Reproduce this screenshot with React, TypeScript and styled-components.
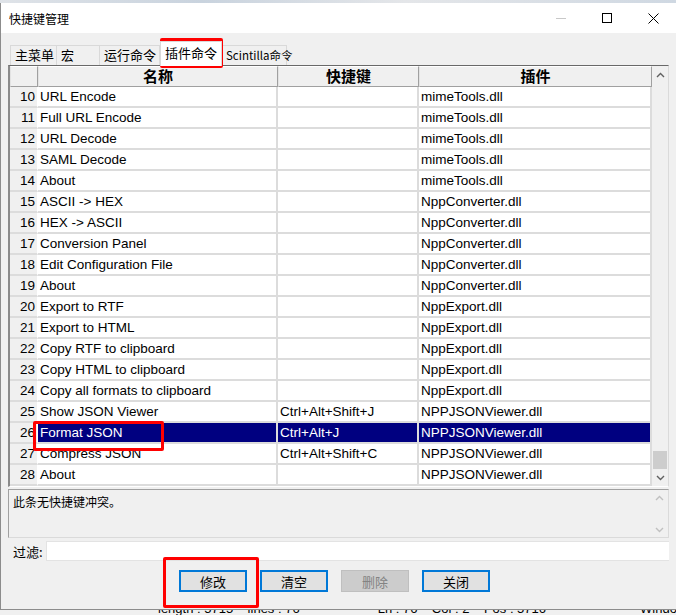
import styled, { createGlobalStyle } from 'styled-components';

const GlobalStyle = createGlobalStyle`
    body {
        margin: 0;
        background: #f0f0f0;
    }
    * { box-sizing: border-box; }
`;

const CJK = `"Noto Sans CJK SC", "Liberation Sans", sans-serif`;
const LATIN = `"Liberation Sans", Arial, "Noto Sans CJK SC", sans-serif`;

const Screen = styled.div`
    position: relative;
    width: 676px;
    height: 615px;
    overflow: hidden;
    background: #f0f0f0;
    display: flex;
    flex-direction: column;
`;

const TopStrip = styled.div`
    height: 3px;
    background: linear-gradient(90deg, #dfe3e8 0%, #c9d3de 30%, #e4e6e9 60%, #cfd8e2 100%);
`;

const Window = styled.div`
    height: 607px;
    display: flex;
    flex-direction: column;
    background: #f0f0f0;
    border-left: 1px solid #8c8c8c;
    border-bottom: 1px solid #8c8c8c;
`;

const TitleBar = styled.div`
    height: 30px;
    background: #ffffff;
    display: flex;
    align-items: center;
    padding-left: 8px;
`;

const TitleText = styled.div`
    flex: 1;
    font-family: ${CJK};
    font-size: 12px;
    color: #000;
`;

const WinButton = styled.div`
    width: 46px;
    height: 30px;
    display: flex;
    align-items: center;
    justify-content: center;
`;

const Content = styled.div`
    flex: 1;
    display: flex;
    flex-direction: column;
    padding: 0 7px 0 7px;
`;

const TabBar = styled.div`
    margin-top: 11px;
    height: 21px;
    display: flex;
    align-items: flex-end;
    padding-left: 2px;
`;

const Tab = styled.div<{ w: number; active?: boolean; small?: boolean }>`
    width: ${(p) => p.w}px;
    height: ${(p) => (p.active ? 25 : 20)}px;
    margin-bottom: ${(p) => (p.active ? -1 : 0)}px;
    padding: ${(p) => (p.active ? '2px 0 0 4px' : '0 0 0 4px')};
    background: ${(p) => (p.active ? '#ffffff' : '#f0f0f0')};
    border: 1px solid #d9d9d9;
    border-bottom: none;
    border-left: ${(p) => (p.active ? '1px solid #d9d9d9' : 'none')};
    font-family: ${CJK};
    font-size: ${(p) => (p.small ? '11.5px' : '13px')};
    line-height: 18px;
    color: #000;
    white-space: nowrap;
    position: relative;
    z-index: ${(p) => (p.active ? 1 : 0)};
    &:first-child { border-left: 1px solid #d9d9d9; }
`;

const Grid = styled.div`
    height: 422px;
    display: flex;
    border-top: 1px solid #696969;
    border-left: 2px solid #8a8a8a;
    border-bottom: 1px solid #ffffff;
    border-right: 1px solid #dadada;
    background: #ffffff;
`;

const Table = styled.div`
    width: 642px;
    display: flex;
    flex-direction: column;
`;

const Row = styled.div`
    display: grid;
    grid-template-columns: 28px 240px 141px 233px;
    height: 21px;
`;

const HeadCell = styled.div`
    background: #f0f0f0;
    border: 1px solid;
    border-color: #ffffff #a0a0a0 #a0a0a0 #e3e3e3;
    font-family: ${CJK};
    font-weight: bold;
    font-size: 15px;
    line-height: 18px;
    text-align: center;
    color: #000;
`;

const NumCell = styled.div`
    background: #f0f0f0;
    border-right: 1px solid #ffffff;
    border-bottom: 2px solid #dcdcdc;
    font-family: ${LATIN};
    font-size: 13.5px;
    line-height: 19px;
    text-align: right;
    padding-right: 2px;
    color: #000;
`;

const Cell = styled.div<{ selected?: boolean }>`
    background: ${(p) => (p.selected ? '#000080' : '#ffffff')};
    color: ${(p) => (p.selected ? '#ffffff' : '#000000')};
    border-right: 2px solid #dcdcdc;
    border-bottom: 2px solid #dcdcdc;
    font-family: ${LATIN};
    font-size: 13.5px;
    line-height: 19px;
    padding-left: 2px;
    white-space: nowrap;
    overflow: hidden;
`;

const ScrollBar = styled.div`
    width: 16px;
    display: flex;
    flex-direction: column;
    background: #f0f0f0;
`;

const ScrollArrow = styled.div`
    height: 17px;
    display: flex;
    align-items: center;
    justify-content: center;
`;

const ScrollTrack = styled.div`
    flex: 1;
    display: flex;
    flex-direction: column;
    justify-content: flex-end;
    align-items: center;
`;

const Thumb = styled.div`
    width: 14px;
    height: 18px;
    background: #cdcdcd;
`;

const MessageBox = styled.div`
    margin-top: 2px;
    height: 49px;
    display: flex;
    border: 1px solid #a0a0a0;
    border-right-color: #dadada;
    border-bottom-color: #dadada;
    background: #f0f0f0;
`;

const MessageText = styled.div`
    flex: 1;
    padding: 3px 0 0 4px;
    font-family: ${CJK};
    font-size: 12px;
    color: #000;
`;

const MiniScroll = styled.div`
    width: 17px;
    display: flex;
    flex-direction: column;
    justify-content: space-between;
    padding: 5px 0 4px;
    align-items: center;
`;

const FilterRow = styled.div`
    margin-top: 3px;
    height: 20px;
    display: flex;
    align-items: center;
`;

const FilterLabel = styled.div`
    width: 38px;
    padding-left: 5px;
    font-family: ${CJK};
    font-size: 13px;
    color: #000;
`;

const FilterInput = styled.div`
    flex: 1;
    height: 20px;
    background: #ffffff;
    border: 1px solid #e3e3e3;
    border-right: none;
`;

const ButtonRow = styled.div`
    margin-top: 9px;
    display: flex;
    gap: 13px;
    padding-left: 171px;
`;

const Button = styled.div<{ disabled?: boolean }>`
    width: 68px;
    height: 22px;
    display: flex;
    align-items: center;
    justify-content: center;
    background: ${(p) => (p.disabled ? '#cccccc' : '#e1e1e1')};
    border: ${(p) => (p.disabled ? '1px solid #bfbfbf' : '2px solid #0078d7')};
    font-family: ${CJK};
    font-size: 13px;
    color: ${(p) => (p.disabled ? '#838383' : '#000')};
`;

const StatusStrip = styled.div`
    height: 5px;
    overflow: hidden;
    background: #f0f0f0;
    display: flex;
    font-family: ${LATIN};
    font-size: 13px;
    line-height: 14px;
    color: #000;
`;

const StatusPart = styled.div<{ left: number }>`
    margin-left: ${(p) => p.left}px;
    margin-top: -8px;
    white-space: nowrap;
`;

const Mark = styled.div`
    position: absolute;
    border: 3px solid #ff0000;
    border-radius: 2px;
    pointer-events: none;
`;

const Chevron = ({ up, color = '#606060' }: { up?: boolean; color?: string }) => (
    <svg width="9" height="6" viewBox="0 0 9 6">
        <path
            d={up ? 'M1 5 L4.5 1.5 L8 5' : 'M1 1 L4.5 4.5 L8 1'}
            fill="none"
            stroke={color}
            strokeWidth="1.4"
        />
    </svg>
);

const rows: [number, string, string, string][] = [
    [10, 'URL Encode', '', 'mimeTools.dll'],
    [11, 'Full URL Encode', '', 'mimeTools.dll'],
    [12, 'URL Decode', '', 'mimeTools.dll'],
    [13, 'SAML Decode', '', 'mimeTools.dll'],
    [14, 'About', '', 'mimeTools.dll'],
    [15, 'ASCII -> HEX', '', 'NppConverter.dll'],
    [16, 'HEX -> ASCII', '', 'NppConverter.dll'],
    [17, 'Conversion Panel', '', 'NppConverter.dll'],
    [18, 'Edit Configuration File', '', 'NppConverter.dll'],
    [19, 'About', '', 'NppConverter.dll'],
    [20, 'Export to RTF', '', 'NppExport.dll'],
    [21, 'Export to HTML', '', 'NppExport.dll'],
    [22, 'Copy RTF to clipboard', '', 'NppExport.dll'],
    [23, 'Copy HTML to clipboard', '', 'NppExport.dll'],
    [24, 'Copy all formats to clipboard', '', 'NppExport.dll'],
    [25, 'Show JSON Viewer', 'Ctrl+Alt+Shift+J', 'NPPJSONViewer.dll'],
    [26, 'Format JSON', 'Ctrl+Alt+J', 'NPPJSONViewer.dll'],
    [27, 'Compress JSON', 'Ctrl+Alt+Shift+C', 'NPPJSONViewer.dll'],
    [28, 'About', '', 'NPPJSONViewer.dll'],
];

const selectedRow = 26;

export default function App() {
    return (
        <>
            <GlobalStyle />
            <Screen>
                <TopStrip />
                <Window>
                    <TitleBar>
                        <TitleText>快捷键管理</TitleText>
                        <WinButton>
                            <svg width="10" height="10" viewBox="0 0 10 10">
                                <path d="M0 5.5 H10" stroke="#c8c8c8" strokeWidth="1" />
                            </svg>
                        </WinButton>
                        <WinButton>
                            <svg width="10" height="10" viewBox="0 0 10 10">
                                <rect x="0.5" y="0.5" width="9" height="9" fill="none" stroke="#000" strokeWidth="1" />
                            </svg>
                        </WinButton>
                        <WinButton>
                            <svg width="11" height="11" viewBox="0 0 11 11">
                                <path d="M0.5 0.5 L10.5 10.5 M10.5 0.5 L0.5 10.5" stroke="#000" strokeWidth="1" />
                            </svg>
                        </WinButton>
                    </TitleBar>
                    <Content>
                        <TabBar>
                            <Tab w={47}>主菜单</Tab>
                            <Tab w={43}>宏</Tab>
                            <Tab w={60}>运行命令</Tab>
                            <Tab w={62} active>插件命令</Tab>
                            <Tab w={65} small>Scintilla命令</Tab>
                        </TabBar>
                        <Grid>
                            <Table>
                                <Row>
                                    <HeadCell />
                                    <HeadCell>名称</HeadCell>
                                    <HeadCell>快捷键</HeadCell>
                                    <HeadCell>插件</HeadCell>
                                </Row>
                                {rows.map(([n, name, key, plugin]) => (
                                    <Row key={n}>
                                        <NumCell>{n}</NumCell>
                                        <Cell selected={n === selectedRow}>{name}</Cell>
                                        <Cell selected={n === selectedRow}>{key}</Cell>
                                        <Cell selected={n === selectedRow}>{plugin}</Cell>
                                    </Row>
                                ))}
                            </Table>
                            <ScrollBar>
                                <ScrollArrow><Chevron up /></ScrollArrow>
                                <ScrollTrack><Thumb /></ScrollTrack>
                                <ScrollArrow><Chevron /></ScrollArrow>
                            </ScrollBar>
                        </Grid>
                        <MessageBox>
                            <MessageText>此条无快捷键冲突。</MessageText>
                            <MiniScroll>
                                <Chevron up color="#c0c0c0" />
                                <Chevron color="#c0c0c0" />
                            </MiniScroll>
                        </MessageBox>
                        <FilterRow>
                            <FilterLabel>过滤:</FilterLabel>
                            <FilterInput />
                        </FilterRow>
                        <ButtonRow>
                            <Button>修改</Button>
                            <Button>清空</Button>
                            <Button disabled>删除</Button>
                            <Button>关闭</Button>
                        </ButtonRow>
                    </Content>
                </Window>
                <StatusStrip>
                    <StatusPart left={158}>length : 5715&nbsp;&nbsp;&nbsp;&nbsp;lines : 76</StatusPart>
                    <StatusPart left={78}>Ln : 76&nbsp;&nbsp;&nbsp;&nbsp;Col : 2&nbsp;&nbsp;&nbsp;&nbsp;Pos : 5716</StatusPart>
                    <StatusPart left={94}>Windows</StatusPart>
                </StatusStrip>
                <Mark style={{ left: 160, top: 38, width: 63, height: 30 }} />
                <Mark style={{ left: 33, top: 421, width: 131, height: 30 }} />
                <Mark style={{ left: 163, top: 557, width: 96, height: 51 }} />
            </Screen>
        </>
    );
}
